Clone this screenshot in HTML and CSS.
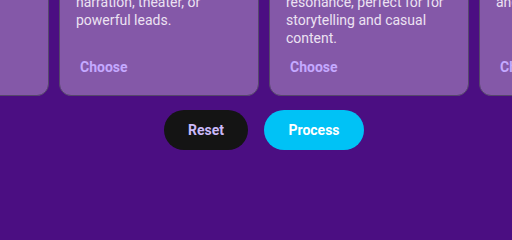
FILE: index.html
```html
<!DOCTYPE html>
<html lang="en">
<head>
<meta charset="utf-8">
<link rel="stylesheet" href="styles.css">
</head>
<body>
  <main class="page">
    <section class="track">
      <article class="card">
        <h3 class="card-title">Bright</h3>
        <p class="card-desc">Crisp, upbeat promo voice.</p>
        <button class="choose">Choose</button>
      </article>
      <article class="card">
        <h3 class="card-title">Deep</h3>
        <p class="card-desc">Bold tone ideal for<br>narration, theater, or powerful leads.</p>
        <button class="choose">Choose</button>
      </article>
      <article class="card">
        <h3 class="card-title">Warm</h3>
        <p class="card-desc">Friendly voice with natural resonance, perfect for for storytelling and casual content.</p>
        <button class="choose">Choose</button>
      </article>
      <article class="card">
        <h3 class="card-title">Soft</h3>
        <p class="card-desc">Gentle, airy tone<br>and ambient reads.</p>
        <button class="choose">Choose</button>
      </article>
    </section>
    <div class="actions">
      <button class="btn btn-reset">Reset</button>
      <button class="btn btn-process">Process</button>
    </div>
  </main>
</body>
</html>
```

FILE: styles.css
```css
* { box-sizing: border-box; }
html, body {
  margin: 0;
  padding: 0;
  background: #4b0e82;
  font-family: Roboto, "Liberation Sans", sans-serif;
}
body {
  width: 512px;
  height: 214px;
  overflow: hidden;
}
.page {
  display: flex;
  flex-direction: column;
}
.track {
  display: flex;
  gap: 10px;
  margin-left: -151px;
  margin-top: -64px;
}
.card {
  flex: 0 0 200px;
  height: 160px;
  background: #8458a8;
  border: 1px solid #55486a;
  border-radius: 12px;
  padding: 16px 16px 16px;
  display: flex;
  flex-direction: column;
  align-items: flex-start;
}
.card-title {
  margin: 0 0 2px;
  font-size: 16px;
  line-height: 20px;
  font-weight: 700;
  color: #ffffff;
}
.card-desc {
  margin: 0;
  font-size: 14px;
  line-height: 18px;
  color: #ece2f2;
}
.choose {
  margin-top: auto;
  background: none;
  border: 0;
  padding: 4px;
  font-family: inherit;
  font-size: 14px;
  font-weight: 700;
  line-height: 16px;
  color: #c4a9ff;
}
.actions {
  display: flex;
  justify-content: center;
  gap: 16px;
  padding-left: 16px;
  margin-top: 14px;
}
.btn {
  height: 40px;
  padding: 0 24px;
  border: 0;
  border-radius: 20px;
  font-family: inherit;
  font-size: 14px;
  font-weight: 700;
}
.btn-reset {
  background: #141414;
  color: #cbb9f9;
  width: 84px;
}
.btn-process {
  background: #00c2f6;
  color: #ffffff;
  width: 100px;
}
```
